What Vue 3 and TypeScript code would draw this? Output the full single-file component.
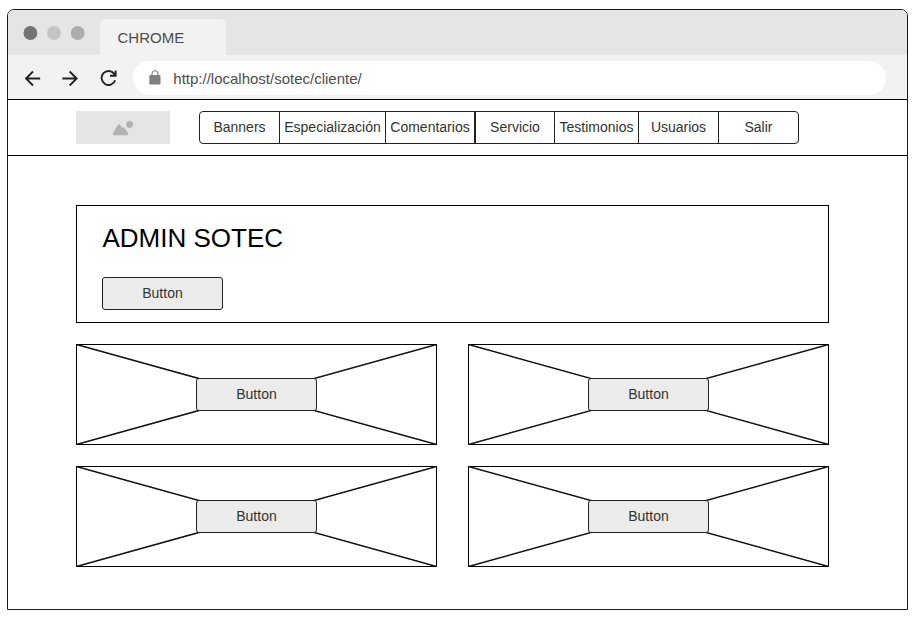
<script setup lang="ts">
interface NavItem {
  label: string
  size: string
}

const navItems: NavItem[] = [
  { label: 'Banners', size: 'w80' },
  { label: 'Especialización', size: 'w106' },
  { label: 'Comentarios', size: 'w90' },
  { label: 'Servicio', size: 'w79' },
  { label: 'Testimonios', size: 'w84' },
  { label: 'Usuarios', size: 'w80' },
  { label: 'Salir', size: 'w79' },
]

const cards: number[] = [1, 2, 3, 4]
</script>

<template>
  <div class="window">
    <div class="tabbar">
      <svg class="dots" width="62" height="14" viewBox="0 0 62 14">
        <circle class="dark" cx="7.4" cy="7" r="6.9" />
        <circle class="light" cx="31" cy="7" r="6.9" />
        <circle class="mid" cx="54.7" cy="7" r="6.9" />
      </svg>
      <div class="tab">CHROME</div>
    </div>
    <div class="toolbar">
      <svg class="arrow" width="16" height="16" viewBox="0 0 16 16">
        <path d="M15.2 8.5H1.3M8 1.5L1 8.5L8 15.5" />
      </svg>
      <svg class="arrow forward" width="16" height="16" viewBox="0 0 16 16">
        <path d="M0.3 8.5H14.4M7.7 1.5L14.7 8.5L7.7 15.5" />
      </svg>
      <svg class="reload" width="17" height="17" viewBox="0 0 17 17">
        <path d="M15.2 11.3A7 7 0 1 1 14.3 4.9L15.3 6.3M15.6 1.4V6.8H10" />
      </svg>
      <div class="address">
        <svg width="12" height="15" viewBox="0 0 12 15">
          <path class="shackle" d="M3 6V3.7a3 3 0 0 1 6 0V6" />
          <rect class="body" x="0.3" y="5" width="11.2" height="9.4" rx="1" />
        </svg>
        <span>http://localhost/sotec/cliente/</span>
      </div>
    </div>
    <header class="header">
      <div class="logo">
        <svg width="22" height="16" viewBox="0 0 22 16">
          <circle cx="17.6" cy="4.5" r="3.4" />
          <path d="M2.3 15.2Q0 15.2 1 13L5.7 5.3Q7 3.3 8.4 5.2L10.4 8L11 7.6Q12.1 6.9 13 8.2L16 13Q17.2 15.2 15 15.2Z" />
        </svg>
      </div>
      <nav class="nav">
        <a v-for="item in navItems" :key="item.label" :class="['item', item.size]">{{ item.label }}</a>
      </nav>
    </header>
    <main class="content">
      <section class="panel">
        <h1>ADMIN SOTEC</h1>
        <button class="btn">Button</button>
      </section>
      <section class="cards">
        <div v-for="card in cards" :key="card" class="card">
          <svg width="361" height="101" viewBox="0 0 361 101">
            <path d="M0.5 0.5L360.5 100.5M360.5 0.5L0.5 100.5" />
          </svg>
          <button class="btn">Button</button>
        </div>
      </section>
    </main>
  </div>
</template>

<style>
body {
  background: #fff;
}
</style>

<style scoped>
* {
  box-sizing: border-box;
}
.window {
  width: 901px;
  height: 601px;
  margin: 9px 0 0 7px;
  border: 1px solid #1a1a1a;
  border-radius: 7px 7px 0 0;
  overflow: hidden;
  background: #fff;
  color: #333;
  font-family: "Liberation Sans", Arial, sans-serif;
  font-size: 14px;
}
.tabbar {
  display: flex;
  align-items: flex-end;
  height: 45px;
  background: #e5e5e5;
}
.dots {
  align-self: flex-start;
  margin: 16px 15px 0;
}
.dark { fill: #737373; }
.light { fill: #c4c4c4; }
.mid { fill: #adadad; }
.tab {
  width: 126px;
  height: 36px;
  padding-left: 17.5px;
  border-radius: 5px 5px 0 0;
  background: #f2f2f2;
  color: #4d4d4d;
  font-size: 15px;
  line-height: 38px;
}
.toolbar {
  display: flex;
  align-items: center;
  height: 45px;
  padding: 1px 0 0 17px;
  border-bottom: 1px solid #000;
  background: #f2f2f2;
}
.arrow,
.reload {
  fill: none;
  stroke: #222;
  stroke-width: 1.9;
  flex: none;
}
.forward {
  margin-left: 21px;
}
.reload {
  margin-left: 22px;
}
.address {
  display: flex;
  align-items: center;
  width: 753px;
  height: 34px;
  margin-left: 16px;
  padding-left: 15.5px;
  border-radius: 17px;
  background: #fff;
  color: #4d4d4d;
  font-size: 15px;
}
.address span {
  margin-left: 12.8px;
  padding-top: 1px;
}
.shackle {
  fill: none;
  stroke: #808080;
  stroke-width: 1.1;
}
.body {
  fill: #808080;
}
.header {
  display: flex;
  height: 56px;
  padding: 11px 0 0 68.6px;
  border-bottom: 1px solid #000;
}
.logo {
  display: flex;
  align-items: center;
  justify-content: center;
  width: 94px;
  height: 33px;
  margin-left: -0.6px;
  background: #e5e5e5;
}
.logo svg {
  fill: #b2b2b2;
}
.nav {
  display: flex;
  width: 600px;
  height: 33px;
  margin-left: 29px;
  border: 1px solid #222;
  border-radius: 4px;
}
.item {
  flex: none;
  border-right: 1px solid #222;
  line-height: 31px;
  text-align: center;
  white-space: nowrap;
}
.item:last-child {
  border-right: 0;
}
.w79 { width: 79px; }
.w80 { width: 80px; }
.w84 { width: 84px; }
.w90 { width: 90px; border-right-width: 2px; }
.w106 { width: 106px; }
.content {
  padding: 49px 0 0 68px;
}
.panel {
  width: 753px;
  height: 118px;
  padding: 16px 25px 0;
  border: 1px solid #000;
}
h1 {
  height: 32px;
  margin: 0 0 23px;
  padding-left: 0.5px;
  color: #000;
  font-size: 26px;
  font-weight: 400;
  line-height: 32px;
}
.btn {
  display: block;
  width: 121px;
  height: 33px;
  padding: 0;
  border: 1px solid #222;
  border-radius: 3px;
  background: #ebebeb;
  color: #333;
  font: 14px/31px "Liberation Sans", Arial, sans-serif;
}
.cards {
  display: grid;
  grid-template-columns: 361px 361px;
  gap: 21px 31px;
  margin-top: 21px;
}
.card {
  display: grid;
  place-items: center;
  width: 361px;
  height: 101px;
  border: 1px solid #000;
}
.card > * {
  grid-area: 1 / 1;
}
.card svg {
  margin: -1px;
  fill: none;
  stroke: #111;
  stroke-width: 1.5;
}
</style>
